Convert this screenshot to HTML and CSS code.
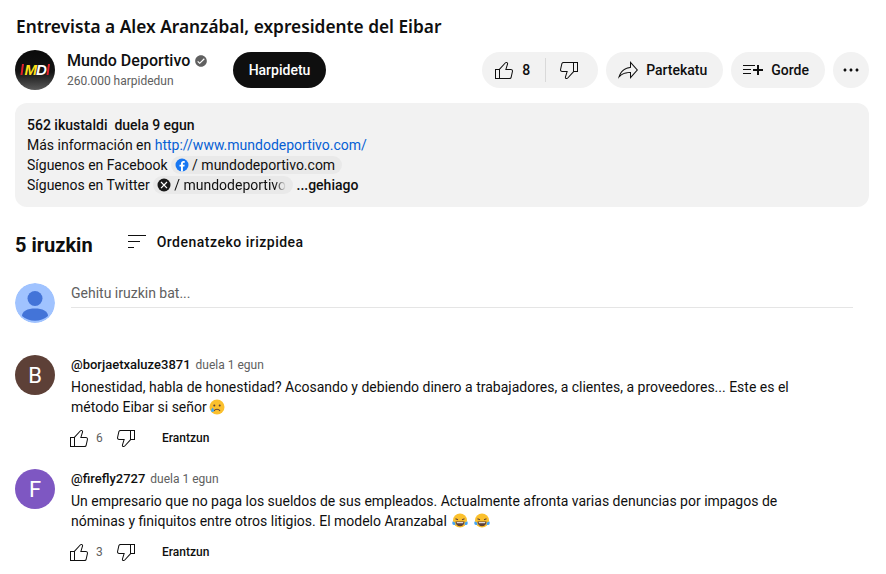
FILE: index.html
```html
<!DOCTYPE html>
<html lang="eu">
<head>
    <meta charset="UTF-8">
    <meta name="viewport" content="width=device-width, initial-scale=1.0">
    <title>Entrevista a Alex Aranzábal, expresidente del Eibar</title>
    <link rel="stylesheet" href="styles.css">
</head>
<body>
    <div class="page">
        <h1 class="video-title">Entrevista a Alex Aranzábal, expresidente del Eibar</h1>

        <!-- Kanala eta ekintzak -->
        <div class="top-row">
            <div class="channel-logo">
                <svg width="40" height="40" viewBox="0 0 40 40">
                    <defs>
                        <linearGradient id="logoFill" x1="0" y1="0" x2="0" y2="1">
                            <stop offset="0" stop-color="#0a0a0a"/>
                            <stop offset="0.55" stop-color="#141414"/>
                            <stop offset="1" stop-color="#5a5a5a"/>
                        </linearGradient>
                    </defs>
                    <circle cx="20" cy="20" r="20" fill="url(#logoFill)"/>
                    <polygon points="7,14 9,14 7.500,25 5.500,25" fill="#e3202a"/>
                    <polygon points="33,14 35,14 33.500,25 31.500,25" fill="#e3202a"/>
                    <text x="9.500" y="25" class="logo-m">M</text>
                    <text x="21" y="25" class="logo-d">D</text>
                </svg>
            </div>
            <div class="channel-info">
                <div class="channel-name">
                    Mundo Deportivo
                    <svg class="verified" width="14" height="14" viewBox="0 0 24 24"><path d="M12 2C6.5 2 2 6.5 2 12s4.5 10 10 10 10-4.5 10-10S17.5 2 12 2zM9.8 17.3l-4.2-4.1L7 11.8l2.8 2.7L17 7.4l1.4 1.4-8.6 8.5z"/></svg>
                </div>
                <div class="channel-subs">260.000 harpidedun</div>
            </div>
            <button type="button" class="subscribe-btn">Harpidetu</button>

            <div class="actions">
                <div class="pill like-pill">
                    <span class="like-part">
                        <svg width="24" height="24" viewBox="0 0 24 24"><path d="M18.77,11h-4.23l1.52-4.94C16.38,5.03,15.54,4,14.38,4c-0.58,0-1.14,0.24-1.52,0.65L7,11H3v10h4h1h9.43 c1.06,0,1.98-0.67,2.19-1.61l1.34-6C21.23,12.15,20.18,11,18.77,11z M7,20H4v-8h3V20z M19.98,13.17l-1.34,6 C18.54,19.65,18.03,20,17.43,20H8v-8.61l5.6-6.06C13.79,5.12,14.08,5,14.38,5c0.26,0,0.5,0.11,0.63,0.3 c0.07,0.1,0.15,0.26,0.09,0.47l-1.52,4.94L13.18,12h1.35h4.23c0.41,0,0.8,0.17,1.03,0.46C19.92,12.61,20.05,12.86,19.98,13.17z"/></svg>
                        8
                    </span>
                    <span class="dislike-part">
                        <svg width="24" height="24" viewBox="0 0 24 24"><path d="M17,4h-1H6.57C5.5,4,4.59,4.67,4.38,5.61l-1.34,6C2.77,12.85,3.82,14,5.23,14h4.23l-1.52,4.94C7.62,19.97,8.46,21,9.62,21 c0.58,0,1.14-0.24,1.52-0.65L17,14h4V4H17z M10.4,19.67C10.21,19.88,9.92,20,9.62,20c-0.26,0-0.5-0.11-0.63-0.3 c-0.07-0.1-0.15-0.26-0.09-0.47l1.52-4.94l0.4-1.29H9.46H5.23c-0.41,0-0.8-0.17-1.03-0.46c-0.12-0.15-0.25-0.4-0.18-0.72l1.34-6 C5.46,5.35,5.97,5,6.57,5H16v8.61L10.4,19.67z M20,13h-3V5h3V13z"/></svg>
                    </span>
                </div>
                <div class="pill share-pill">
                    <svg width="24" height="24" viewBox="0 0 24 24"><path d="M15 5.63 20.66 12 15 18.37V14h-1c-3.96 0-7.14 1-9.75 3.09 1.84-4.07 5.11-6.4 9.89-7.1l.86-.13V5.63M14 3v6C6.22 10.13 3.11 15.33 2 21c2.78-3.97 6.44-6 12-6v6l8-9-8-9z"/></svg>
                    Partekatu
                </div>
                <div class="pill save-pill">
                    <svg width="24" height="24" viewBox="0 0 24 24"><path d="M22 13h-4v4h-2v-4h-4v-2h4V7h2v4h4v2zm-8-6H2v1h12V7zM2 12h8v-1H2v1zm0 4h8v-1H2v1z"/></svg>
                    Gorde
                </div>
                <div class="pill more-pill">
                    <svg width="24" height="24" viewBox="0 0 24 24"><path d="M7.5 12c0 .83-.67 1.5-1.5 1.5s-1.5-.67-1.5-1.5.67-1.5 1.5-1.5 1.5.67 1.5 1.5zm4.5-1.5c-.83 0-1.5.67-1.5 1.5s.67 1.5 1.5 1.5 1.5-.67 1.5-1.5-.67-1.5-1.5-1.5zm6 0c-.83 0-1.5.67-1.5 1.5s.67 1.5 1.5 1.5 1.5-.67 1.5-1.5-.67-1.5-1.5-1.5z"/></svg>
                </div>
            </div>
        </div>

        <!-- Deskribapena -->
        <div class="description">
            <div class="desc-line desc-meta">562 ikustaldi&nbsp; duela 9 egun</div>
            <div class="desc-line">Más información en <a class="desc-link" href="#">http://www.mundodeportivo.com/</a></div>
            <div class="desc-line">Síguenos en Facebook <span class="chip"><svg width="14" height="14" viewBox="0 0 14 14"><circle cx="7" cy="7" r="6.5" fill="#1877f2"/><path d="M7.9 13.4V8.6h1.5l.3-1.8H7.9V5.7c0-.6.3-1 1-1h.9V3.2c-.4-.1-.9-.1-1.3-.1-1.5 0-2.5.9-2.5 2.4v1.3H4.5v1.8H6v4.8z" fill="#fff"/></svg><span>/ mundodeportivo.com</span></span></div>
            <div class="desc-line">Síguenos en Twitter <span class="chip chip-cut"><svg width="14" height="14" viewBox="0 0 14 14"><circle cx="7" cy="7" r="6.5" fill="#1a1a1a"/><path d="M4 4l6 6.2M10 4l-6 6.2" stroke="#fff" stroke-width="1.2" fill="none"/></svg><span class="chip-fade">/ mundodeportivo</span></span> <span class="more-link">...gehiago</span></div>
        </div>

        <!-- Iruzkinak -->
        <div class="comments-head">
            <h2 class="comments-count">5 iruzkin</h2>
            <div class="sort-by">
                <svg width="24" height="24" viewBox="0 0 24 24"><path d="M21 6H3V5h18v1zm-6 5H3v1h12v-1zm-6 6H3v1h6v-1z"/></svg>
                Ordenatzeko irizpidea
            </div>
        </div>

        <div class="add-comment">
            <svg class="avatar" width="40" height="40" viewBox="0 0 40 40">
                <circle cx="20" cy="20" r="20" fill="#a0c3ff"/>
                <circle cx="20" cy="15.5" r="7.5" fill="#4374d8"/>
                <path d="M7 33c0-5 5.500-7.500 13-7.500s13 2.500 13 7.500a20 20 0 0 1-26 0z" fill="#4374d8"/>
            </svg>
            <div class="add-input">Gehitu iruzkin bat...</div>
        </div>

        <div class="comment">
            <div class="avatar letter-avatar brown">B</div>
            <div class="comment-body">
                <div class="comment-meta"><span class="author">@borjaetxaluze3871</span><span class="when">duela 1 egun</span></div>
                <div class="comment-text">Honestidad, habla de honestidad? Acosando y debiendo dinero a trabajadores, a clientes, a proveedores... Este es el método Eibar si señor<svg class="emoji" width="16" height="16" viewBox="0 0 16 16"><circle cx="8" cy="8" r="7.500" fill="#fbc02d"/><circle cx="5.300" cy="6.500" r="1" fill="#5d4037"/><circle cx="10.700" cy="6.500" r="1" fill="#5d4037"/><path d="M5 11.800c1.500-2 4.500-2 6 0" stroke="#5d4037" stroke-width="1.100" fill="none"/><path d="M3.500 8.500c-1 1.500-1.500 2.300-1.500 3a1.500 1.500 0 0 0 3 0c0-.7-.5-1.500-1.500-3z" fill="#42a5f5"/></svg></div>
                <div class="comment-actions">
                    <svg width="24" height="24" viewBox="0 0 24 24"><path d="M18.77,11h-4.23l1.52-4.94C16.38,5.03,15.54,4,14.38,4c-0.58,0-1.14,0.24-1.52,0.65L7,11H3v10h4h1h9.43 c1.06,0,1.98-0.67,2.19-1.61l1.34-6C21.23,12.15,20.18,11,18.77,11z M7,20H4v-8h3V20z M19.98,13.17l-1.34,6 C18.54,19.65,18.03,20,17.43,20H8v-8.61l5.6-6.06C13.79,5.12,14.08,5,14.38,5c0.26,0,0.5,0.11,0.63,0.3 c0.07,0.1,0.15,0.26,0.09,0.47l-1.52,4.94L13.18,12h1.35h4.23c0.41,0,0.8,0.17,1.03,0.46C19.92,12.61,20.05,12.86,19.98,13.17z"/></svg>
                    <span class="like-count">6</span>
                    <svg width="24" height="24" viewBox="0 0 24 24"><path d="M17,4h-1H6.57C5.5,4,4.59,4.67,4.38,5.61l-1.34,6C2.77,12.85,3.82,14,5.23,14h4.23l-1.52,4.94C7.62,19.97,8.46,21,9.62,21 c0.58,0,1.14-0.24,1.52-0.65L17,14h4V4H17z M10.4,19.67C10.21,19.88,9.92,20,9.62,20c-0.26,0-0.5-0.11-0.63-0.3 c-0.07-0.1-0.15-0.26-0.09-0.47l1.52-4.94l0.4-1.29H9.46H5.23c-0.41,0-0.8-0.17-1.03-0.46c-0.12-0.15-0.25-0.4-0.18-0.72l1.34-6 C5.46,5.35,5.97,5,6.57,5H16v8.61L10.4,19.67z M20,13h-3V5h3V13z"/></svg>
                    <span class="reply">Erantzun</span>
                </div>
            </div>
        </div>

        <div class="comment">
            <div class="avatar letter-avatar purple">F</div>
            <div class="comment-body">
                <div class="comment-meta"><span class="author">@firefly2727</span><span class="when">duela 1 egun</span></div>
                <div class="comment-text">Un empresario que no paga los sueldos de sus empleados. Actualmente afronta varias denuncias por impagos de nóminas y finiquitos entre otros litigios. El modelo Aranzabal <svg class="emoji" width="16" height="16" viewBox="0 0 16 16"><circle cx="8" cy="7.500" r="7" fill="#fbc02d"/><path d="M3.500 5.800l2.500 1M12.500 5.800l-2.500 1" stroke="#5d4037" stroke-width="1.100" fill="none"/><path d="M3.500 8.500h9c0 3-2 4.800-4.500 4.800s-4.500-1.800-4.500-4.800z" fill="#5d4037"/><path d="M4.800 9.200h6.400v1H4.800z" fill="#fff"/><path d="M.5 8.500c1.800 0 3 1.200 3 3 0 .5-2.500.8-3-.2-.3-.8-.3-1.800 0-2.800zM15.500 8.500c-1.800 0-3 1.200-3 3 0 .5 2.500.8 3-.2.300-.8.300-1.800 0-2.800z" fill="#42a5f5"/></svg> <svg class="emoji" width="16" height="16" viewBox="0 0 16 16"><circle cx="8" cy="7.500" r="7" fill="#fbc02d"/><path d="M3.500 5.800l2.500 1M12.500 5.800l-2.500 1" stroke="#5d4037" stroke-width="1.100" fill="none"/><path d="M3.500 8.500h9c0 3-2 4.800-4.500 4.800s-4.500-1.800-4.500-4.800z" fill="#5d4037"/><path d="M4.800 9.200h6.400v1H4.800z" fill="#fff"/><path d="M.5 8.500c1.800 0 3 1.200 3 3 0 .5-2.500.8-3-.2-.3-.8-.3-1.800 0-2.800zM15.500 8.500c-1.800 0-3 1.200-3 3 0 .5 2.500.8 3-.2.300-.8.300-1.800 0-2.800z" fill="#42a5f5"/></svg></div>
                <div class="comment-actions">
                    <svg width="24" height="24" viewBox="0 0 24 24"><path d="M18.77,11h-4.23l1.52-4.94C16.38,5.03,15.54,4,14.38,4c-0.58,0-1.14,0.24-1.52,0.65L7,11H3v10h4h1h9.43 c1.06,0,1.98-0.67,2.19-1.61l1.34-6C21.23,12.15,20.18,11,18.77,11z M7,20H4v-8h3V20z M19.98,13.17l-1.34,6 C18.54,19.65,18.03,20,17.43,20H8v-8.61l5.6-6.06C13.79,5.12,14.08,5,14.38,5c0.26,0,0.5,0.11,0.63,0.3 c0.07,0.1,0.15,0.26,0.09,0.47l-1.52,4.94L13.18,12h1.35h4.23c0.41,0,0.8,0.17,1.03,0.46C19.92,12.61,20.05,12.86,19.98,13.17z"/></svg>
                    <span class="like-count">3</span>
                    <svg width="24" height="24" viewBox="0 0 24 24"><path d="M17,4h-1H6.57C5.5,4,4.59,4.67,4.38,5.61l-1.34,6C2.77,12.85,3.82,14,5.23,14h4.23l-1.52,4.94C7.62,19.97,8.46,21,9.62,21 c0.58,0,1.14-0.24,1.52-0.65L17,14h4V4H17z M10.4,19.67C10.21,19.88,9.92,20,9.62,20c-0.26,0-0.5-0.11-0.63-0.3 c-0.07-0.1-0.15-0.26-0.09-0.47l1.52-4.94l0.4-1.29H9.46H5.23c-0.41,0-0.8-0.17-1.03-0.46c-0.12-0.15-0.25-0.4-0.18-0.72l1.34-6 C5.46,5.35,5.97,5,6.57,5H16v8.61L10.4,19.67z M20,13h-3V5h3V13z"/></svg>
                    <span class="reply">Erantzun</span>
                </div>
            </div>
        </div>
    </div>
</body>
</html>
```

FILE: styles.css
```css
html, body {
    margin: 0;
    height: 100%;
    overflow: hidden;
    background: #fff;
}

body {
    font-family: Roboto, Arial, sans-serif;
    color: #0f0f0f;
}

svg {
    flex-shrink: 0;
    fill: #0f0f0f;
}

.page {
    padding: 15px 17px 0 15px;
}

.video-title {
    margin: 0;
    padding-left: 1px;
    font-family: "Noto Sans", Arial, sans-serif;
    font-size: 17.3px;
    font-weight: 600;
    line-height: 24px;
}

.top-row {
    display: flex;
    align-items: center;
    height: 40px;
    margin-top: 9px;
    padding-top: 2px;
}

.channel-logo {
    width: 40px;
    height: 40px;
    margin-right: 12px;
}

.logo-m, .logo-d {
    font-family: "Liberation Sans", Arial, sans-serif;
    font-size: 15px;
    font-weight: 700;
    font-style: italic;
}

.logo-m {
    fill: #ffe11a;
}

.logo-d {
    fill: #fff;
}

.channel-info {
    width: 166px;
}

.channel-name {
    display: flex;
    align-items: center;
    gap: 4px;
    font-size: 16px;
    font-weight: 500;
    line-height: 22px;
}

.verified {
    fill: #606060;
}

.channel-subs {
    font-size: 12px;
    line-height: 18px;
    color: #606060;
}

.subscribe-btn {
    width: 93px;
    height: 36px;
    padding: 0;
    border: none;
    border-radius: 18px;
    background: #0f0f0f;
    color: #fff;
    font-family: Roboto, Arial, sans-serif;
    font-size: 14px;
    font-weight: 500;
}

.actions {
    display: flex;
    gap: 8px;
    margin-left: auto;
}

.pill {
    display: flex;
    align-items: center;
    height: 36px;
    border-radius: 18px;
    background: #f2f2f2;
    font-size: 14px;
    font-weight: 500;
}

.like-part {
    display: flex;
    align-items: center;
    gap: 6px;
    height: 24px;
    padding: 0 15px 0 10px;
    border-right: 1px solid #d9d9d9;
}

.dislike-part {
    display: flex;
    padding: 0 17px 0 11px;
}

.share-pill, .save-pill {
    gap: 6px;
    padding: 0 16px 0 10px;
}

.more-pill {
    justify-content: center;
    width: 36px;
}

.description {
    height: 80px;
    margin-top: 13px;
    padding: 12px;
    border-radius: 12px;
    background: #f2f2f2;
    font-size: 14px;
    line-height: 20px;
}

.desc-line {
    height: 20px;
    white-space: nowrap;
}

.desc-meta {
    font-weight: 500;
}

.desc-link {
    color: #065fd4;
    text-decoration: none;
}

.chip {
    display: inline-flex;
    align-items: center;
    gap: 3px;
    height: 18px;
    padding: 0 7px 0 4px;
    border-radius: 9px;
    background: #e9e9e9;
    vertical-align: top;
    margin-top: 1px;
}

.chip-fade {
    -webkit-mask-image: linear-gradient(to right, #000 90%, transparent 100%);
    mask-image: linear-gradient(to right, #000 90%, transparent 100%);
}

.more-link {
    font-weight: 500;
}

.comments-head {
    display: flex;
    align-items: center;
    margin-top: 24px;
    height: 28px;
}

.comments-count {
    margin: 0 32px 0 0;
    font-size: 20px;
    font-weight: 700;
    line-height: 28px;
}

.sort-by {
    display: flex;
    align-items: center;
    gap: 8px;
    margin-top: -6px;
    font-size: 14px;
    font-weight: 500;
    letter-spacing: 0.5px;
}

.add-comment {
    display: flex;
    margin-top: 24px;
    gap: 16px;
}

.avatar {
    width: 40px;
    height: 40px;
    flex-shrink: 0;
    border-radius: 50%;
}

.add-input {
    width: 782px;
    height: 24px;
    border-bottom: 1px solid #e5e5e5;
    font-size: 14px;
    line-height: 20px;
    color: #606060;
}

.comment {
    display: flex;
    gap: 16px;
    margin-top: 32px;
    height: 82px;
}

.letter-avatar {
    display: flex;
    align-items: center;
    justify-content: center;
    color: #fff;
    font-size: 22px;
}

.brown {
    background: #5d4037;
}

.purple {
    background: #7e57c2;
}

.comment-body {
    width: 730px;
}

.comment-meta {
    display: flex;
    align-items: baseline;
    gap: 5px;
    padding-top: 1px;
    font-size: 13px;
    line-height: 18px;
}

.author {
    font-weight: 500;
}

.when {
    font-size: 12px;
    color: #606060;
}

.comment-text {
    margin-top: 3px;
    font-size: 14px;
    line-height: 20px;
}

.emoji {
    vertical-align: -3px;
    margin-left: 2px;
}

.comment-actions {
    display: flex;
    align-items: center;
    margin: 9px 0 0 -4px;
    height: 24px;
}

.like-count {
    width: 23px;
    padding-left: 5px;
    font-size: 12px;
    color: #606060;
    box-sizing: border-box;
}

.reply {
    margin-left: 24px;
    font-size: 12px;
    font-weight: 500;
}
```
